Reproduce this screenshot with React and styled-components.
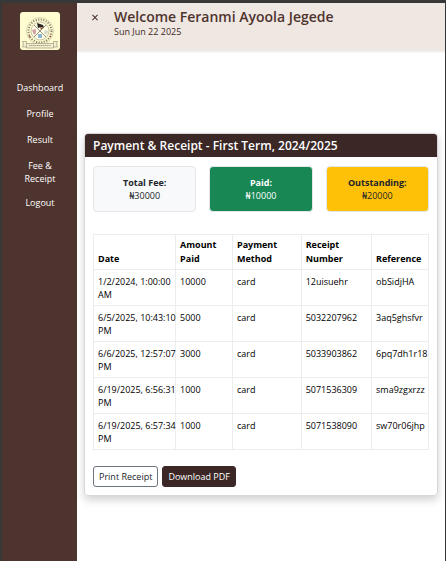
import React from "react";
import styled, { createGlobalStyle, css } from "styled-components";

const GlobalStyle = createGlobalStyle`
  *, *::before, *::after { box-sizing: border-box; }
  body {
    margin: 0;
    background: #fff;
    color: #111;
    font-family: "Open Sans", "Noto Sans", sans-serif;
    font-size: 9px;
    line-height: 13px;
  }
  h1, h2, p { margin: 0; }
`;

const Shell = styled.div`
  display: flex;
  min-height: 100vh;
  border: solid #383838;
  border-width: 3px 1px 0 2px;
`;

const Sidebar = styled.aside`
  flex: none;
  display: flex;
  flex-direction: column;
  align-items: center;
  width: 75px;
  padding: 9px 0 0 1px;
  background: #4e342e;
`;

const Logo = styled.svg`
  display: block;
  width: 40px;
  height: 38px;
  margin-bottom: 26px;
  border-radius: 3px;
  background: #fffccf;
`;

const Nav = styled.nav`
  display: flex;
  flex-direction: column;
  gap: 3px;
`;

const navItem = css`
  padding: 5px 15px;
  border: 0;
  background: none;
  color: #fff;
  font: inherit;
  text-align: center;
  text-decoration: none;
`;

const NavLink = styled.a`
  ${navItem}
`;

const Logout = styled.button`
  ${navItem}
  margin-top: 1px;
  cursor: pointer;
`;

const Main = styled.div`
  flex: 1;
  min-width: 0;
`;

const TopBar = styled.header`
  display: flex;
  align-items: flex-start;
  gap: 10px;
  min-height: 48px;
  padding: 5px 9px;
  background: #efe7e2;
  color: #4e342e;
  box-shadow: 0 1px 2px rgba(0, 0, 0, 0.08);
`;

const CloseButton = styled.button`
  display: flex;
  width: 18px;
  padding: 6px;
  border: 0;
  background: none;
  color: #4e342e;
  cursor: pointer;
`;

const Title = styled.h1`
  font-size: 14px;
  font-weight: 600;
  line-height: 17px;
`;

const Today = styled.p`
  color: #3e2723;
`;

const Card = styled.section`
  margin: 82px 7px 0;
  border: 1px solid #d8d6d6;
  border-radius: 4px;
  box-shadow: 0 4px 9px rgba(0, 0, 0, 0.18);
`;

const CardTitle = styled.h2`
  padding: 3px 8px;
  border-radius: 3px 3px 0 0;
  background: #3b2725;
  color: #fff;
  font-size: 12px;
  font-weight: 600;
  line-height: 17px;
`;

const CardBody = styled.div`
  padding: 9px 8px 8px;
`;

const Stats = styled.div`
  display: grid;
  grid-template-columns: repeat(3, 1fr);
  gap: 13px;
  margin-bottom: 22px;
`;

const Stat = styled.div`
  padding: 9px 4px;
  border: 1px solid #e4e6e9;
  border-radius: 4px;
  background: ${(p) => p.$fill};
  color: ${(p) => p.$ink};
  text-align: center;
`;

const StatLabel = styled.p`
  font-weight: 700;
`;

const Table = styled.table`
  width: 100%;
  margin-bottom: 16px;
  border-collapse: collapse;
  table-layout: fixed;
  color: #000;
`;

const Col = styled.col`
  width: ${(p) => p.$share}%;
`;

const cell = css`
  border: 1px solid #ecedef;
  text-align: left;
`;

const Th = styled.th`
  ${cell}
  padding: 3px 0 3px 4px;
  font-weight: 700;
  line-height: 14px;
  vertical-align: bottom;
`;

const Td = styled.td`
  ${cell}
  padding: 5px 0 4px 4px;
  vertical-align: top;
`;

const NoBreak = styled.span`
  white-space: nowrap;
`;

const Actions = styled.div`
  display: flex;
  gap: 4px;
`;

const Button = styled.button`
  padding: 3px 5px;
  border: 1px solid ${(p) => (p.$solid ? "#3b2725" : "#6c757d")};
  border-radius: 3px;
  background: ${(p) => (p.$solid ? "#3b2725" : "#fff")};
  color: ${(p) => (p.$solid ? "#fff" : "#212529")};
  font: inherit;
  white-space: nowrap;
  cursor: pointer;
`;

const links = ["Dashboard", "Profile", "Result", "Fee & Receipt"];

const stats = [
  { label: "Total Fee:", value: "₦30000", fill: "#f8f9fb", ink: "#212529" },
  { label: "Paid:", value: "₦10000", fill: "#198754", ink: "#fff" },
  { label: "Outstanding:", value: "₦20000", fill: "#ffc107", ink: "#212529" },
];

const columns = [
  { name: "Date", share: 24.5 },
  { name: "Amount Paid", share: 17 },
  { name: "Payment Method", share: 20.5 },
  { name: "Receipt Number", share: 21 },
  { name: "Reference", share: 17 },
];

const payments = [
  { time: "1/2/2024, 1:00:00", half: "AM", rest: ["10000", "card", "12uisuehr", "obSidjHA"] },
  { time: "6/5/2025, 10:43:10", half: "PM", rest: ["5000", "card", "5032207962", "3aq5ghsfvr"] },
  { time: "6/6/2025, 12:57:07", half: "PM", rest: ["3000", "card", "5033903862", "6pq7dh1r18"] },
  { time: "6/19/2025, 6:56:31", half: "PM", rest: ["1000", "card", "5071536309", "sma9zgxrzz"] },
  { time: "6/19/2025, 6:57:34", half: "PM", rest: ["1000", "card", "5071538090", "sw70r06jhp"] },
];

function Crest() {
  return (
    <Logo viewBox="0 0 40 38" role="img" aria-label="School crest">
      <circle cx="20" cy="19" r="13.500" fill="none" stroke="#c4bf9f" strokeWidth="0.6" />
      <circle cx="20" cy="19" r="11.500" fill="none" stroke="#8b8672" strokeWidth="2" strokeDasharray="1.200 1.400" />
      <circle cx="20" cy="19" r="9" fill="#fffde3" stroke="#b5af92" strokeWidth="0.7" />
      <path d="M14 13l12 12M26 13L14 25" stroke="#666156" strokeWidth="0.7" />
      <path d="M17 11l6 2 1 3-3-1-3 1z" fill="#292522" />
      <path d="M20 15l3 1-2 2z" fill="#8d5630" />
      <path d="M12 18l4-1v4l-2 2z" fill="#d4a0a8" />
      <path d="M25 18l3 1-1 4-3-2z" fill="#d8dbc8" />
      <path d="M18 22h4v4h-4z" fill="#8eb5d4" />
      <path d="M9 24l1 1M31 24l-1 1" stroke="#a23c36" strokeWidth="1.2" />
      <path d="M2.500 29.500h4v2h27v-2h4l-1 2.500 1 3h-4v1h-27v-1h-4l1-3z" fill="#f4f0cb" stroke="#9c9884" strokeWidth="0.7" />
      <path d="M6.500 31.500v3.500M33.500 31.500v3.500" stroke="#9c9884" strokeWidth="0.7" />
      <path d="M9 33.500h22" stroke="#a89f8a" strokeWidth="1" strokeDasharray="1.500 0.500" />
    </Logo>
  );
}

export default function App() {
  return (
    <>
      <GlobalStyle />
      <Shell>
        <Sidebar>
          <Crest />
          <Nav>
            {links.map((name) => (
              <NavLink href="#" key={name}>{name}</NavLink>
            ))}
          </Nav>
          <Logout type="button">Logout</Logout>
        </Sidebar>
        <Main>
          <TopBar>
            <CloseButton type="button" aria-label="Close menu">
              <svg width="7" height="7" viewBox="0 0 7 7" aria-hidden="true">
                <path d="M0.500 0.500l6 6M6.500 0.500l-6 6" stroke="currentColor" strokeWidth="1.200" />
              </svg>
            </CloseButton>
            <div>
              <Title>Welcome Feranmi Ayoola Jegede</Title>
              <Today>Sun Jun 22 2025</Today>
            </div>
          </TopBar>
          <Card>
            <CardTitle>Payment &amp; Receipt - First Term, 2024/2025</CardTitle>
            <CardBody>
              <Stats>
                {stats.map((s) => (
                  <Stat key={s.label} $fill={s.fill} $ink={s.ink}>
                    <StatLabel>{s.label}</StatLabel>
                    <p>{s.value}</p>
                  </Stat>
                ))}
              </Stats>
              <Table>
                <colgroup>
                  {columns.map((c) => <Col key={c.name} $share={c.share} />)}
                </colgroup>
                <thead>
                  <tr>{columns.map((c) => <Th scope="col" key={c.name}>{c.name}</Th>)}</tr>
                </thead>
                <tbody>
                  {payments.map((row) => (
                    <tr key={row.time}>
                      <Td><NoBreak>{row.time}</NoBreak> {row.half}</Td>
                      {row.rest.map((value) => <Td key={value}>{value}</Td>)}
                    </tr>
                  ))}
                </tbody>
              </Table>
              <Actions>
                <Button type="button">Print Receipt</Button>
                <Button type="button" $solid>Download PDF</Button>
              </Actions>
            </CardBody>
          </Card>
        </Main>
      </Shell>
    </>
  );
}
